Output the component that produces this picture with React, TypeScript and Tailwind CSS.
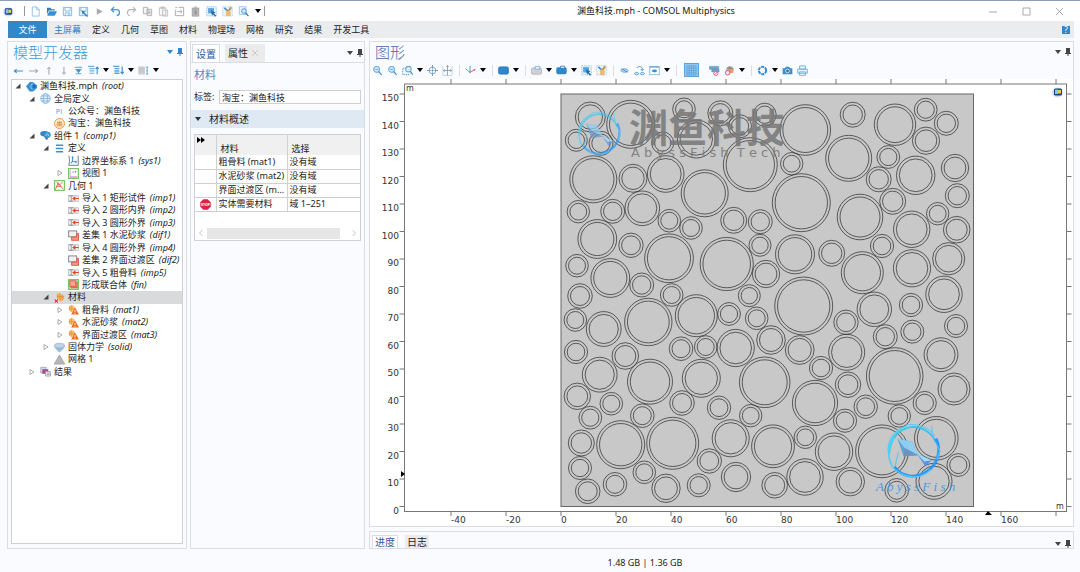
import type { ReactNode } from "react";

const BLUE = "#3a8fd0";
const LIGHT = "#8fbfe4";
const GRAY = "#a8a8a8";
const ORANGE = "#f08a24";

// Todos los iconos se dibujan sobre una rejilla de 12x12
const ICONS: Record<string, ReactNode> = {
  app: (
    <>
      <ellipse cx="5.5" cy="6.5" rx="5.5" ry="5" fill="#d5dcf0" />
      <rect x="2" y="2.5" width="8" height="7" rx="1.5" fill="#1d3f94" />
      <path d="M3 3.5h3v4.5H3z" fill="#7cc8e8" />
      <path d="M6 4h3v3.5H6z" fill="#e5d24a" />
    </>
  ),
  file: <path d="M2.5 1h4.7L10 3.8V11H2.5zM7 1v3h3" fill="none" stroke={LIGHT} />,
  open: (
    <>
      <path d="M1 2h4l1 1.5h3.5V5H3L1 9.5z" fill="#2f7fbf" />
      <path d="M3.4 5.6H12L9.6 10.5H1.2z" fill={BLUE} />
    </>
  ),
  save: (
    <path d="M1.5 1.5h9v9h-9zM3.2 1.5v4h5.6v-4M3.5 10.5v-3h5v3M6.8 8v2" fill="none" stroke="#7fb8e2" />
  ),
  saveAs: (
    <>
      <path d="M1.5 1.5h9v9h-9zM3.2 1.5v4h5.6v-4" fill="#e3f0fa" stroke="#7fb8e2" />
      <path d="M4 5l4 1-1.2 1L11 11 9.7 12 6 8.2 5 9.3z" fill="#2f80bf" />
    </>
  ),
  play: <path d="M3 2.5L9.5 6 3 9.5z" fill="#aaa" />,
  undo: <path d="M4.5 1.2L1.5 4l3 2.8M1.5 4h5.8c4 0 4 6.4 0 6.4" fill="none" stroke="#4a9bd4" strokeWidth="1.5" />,
  redo: <path d="M7.5 1.2l3 2.8-3 2.8M10.5 4H4.7c-4 0-4 6.4-.4 6.4" fill="none" stroke="#b5b5b5" strokeWidth="1.2" />,
  copy: <path d="M1.5 1.5h4.8v7H1.5zM5.5 3.5h5v7h-5zM6.8 5.5h2.5M6.8 7h2.5M6.8 8.5h2.5" fill="#f4f4f4" stroke={GRAY} strokeWidth=".9" />,
  paste: <path d="M1.5 2h7v8h-7zM3.5 1h3v1.7h-3zM5 4.5h5.5V11H5z" fill="#f6f6f6" stroke="#b8b8b8" strokeWidth=".9" />,
  duplicate: <path d="M5 1.5h5.5v9H1.5V4M3 6.2h5.5M6.8 4.2l2 2-2 2M1.5 1.5h2" fill="none" stroke={GRAY} />,
  trash: (
    <>
      <path d="M2.5 3.2h7V11h-7z" fill="#c4c4c4" stroke="#9a9a9a" />
      <path d="M1.8 2.4h8.4M4.5 1.2h3M4.7 4.5v5M6 4.5v5M7.3 4.5v5" stroke="#888" strokeWidth=".8" />
    </>
  ),
  select: (
    <>
      <rect x=".8" y=".8" width="10.4" height="10" fill="#eaf4fb" stroke="#8dc1e6" strokeDasharray="1.4 1" />
      <rect x="2.3" y="2.3" width="6.4" height="5.8" fill="#58a5dc" />
      <path d="M5.5 5l5 2-2 .8 2.6 2.8-1.2 1L7.5 9l-1 1.6z" fill="#2668a3" />
    </>
  ),
  brush: (
    <>
      <rect x=".8" y=".8" width="10.4" height="10" fill="#eef5fb" stroke="#a5cdea" strokeDasharray="1.4 1" />
      <path d="M2.5 2l4.2 3.6" stroke={BLUE} strokeWidth="1.6" />
      <path d="M9 .8L6.2 5l2 1L11 2z" fill="#c99448" />
      <path d="M4 5l6 1.2L9 11.2 4.5 11z" fill="#ecbc72" />
    </>
  ),
  find: (
    <>
      <path d="M1.5.8h7.2v8.5H1.5z" fill="#eef6fc" stroke="#9ac7e8" />
      <circle cx="6.5" cy="5.5" r="2.6" fill="#cfe5f5" stroke="#4e98ce" />
      <path d="M8.4 7.6l3 3.4" stroke="#30688f" strokeWidth="1.3" />
    </>
  ),
  left: <path d="M11 6.500H1.500M4 4.500l-2.500 2L4 8.500" fill="none" stroke={BLUE} strokeWidth="1.200" />,
  right: <path d="M1 6.500h9.500M8 4.500l2.500 2L8 8.500" fill="none" stroke="#aaa" strokeWidth="1.100" />,
  up: <path d="M6.500 10.500V2.500M4.500 4.500l2-2 2 2" fill="none" stroke="#999" />,
  down: <path d="M6.500 2v8M4.500 8l2 2 2-2" fill="none" stroke="#999" />,
  collapse: <path d="M2 2.500h8M2.500 4.800h7M3 9.500h6M4 5.500h4L6 8.500z" fill={BLUE} stroke={BLUE} strokeWidth=".9" />,
  listUp: (
    <>
      <path d="M0 1.500h7M1.500 4h5.500M1.500 6.500h5.500M1.500 9h5.500" stroke="#6fb0de" strokeWidth="1.300" />
      <path d="M10 10V2.500M8.300 4.200L10 2.300l1.700 1.900" fill="none" stroke={BLUE} strokeWidth="1.200" />
    </>
  ),
  listDown: (
    <>
      <path d="M0 1.500h7M1.500 4h5.500M1.500 6.500h5.500M1.500 9h5.500" stroke="#5aa3d8" strokeWidth="1.500" />
      <path d="M10 1.500V9M8.300 7.500L10 9.400l1.700-1.900" fill="none" stroke={BLUE} strokeWidth="1.300" />
    </>
  ),
  columns: (
    <>
      <path d="M.5 1.500h7v9h-7z" fill="#d0d0d0" />
      <path d="M.5 3.500h7M.5 5.500h7M.5 7.500h7" stroke="#b4b4b4" strokeWidth=".6" />
      <path d="M10 1.500v9" stroke="#6aaedd" strokeWidth="1.800" strokeDasharray="2.500 .8" />
    </>
  ),
  root: (
    <>
      <path d="M0 6l4-5h3.500L12 4.500v3L8 11.500H4z" fill={BLUE} />
      <path d="M7 2.500L5 6l2 3.500" stroke="#9fcdef" fill="none" />
      <circle cx="9" cy="6" r="1.600" fill="#1d68a8" />
    </>
  ),
  globe: (
    <g fill="#e6f2fb" stroke="#6fabd8" strokeWidth=".8">
      <circle cx="6" cy="6" r="5.200" />
      <ellipse cx="6" cy="6" rx="2.400" ry="5.200" />
      <path d="M.8 6h10.400M1.600 3.300h8.800M1.600 8.700h8.800" />
    </g>
  ),
  param: (
    <text x="2" y="9" fontSize="8" fill="#5aa5d8" fontFamily="Noto Sans">
      Pi
    </text>
  ),
  bundle: (
    <>
      <circle cx="6" cy="6" r="5.400" fill="#fff0dc" stroke={ORANGE} />
      <path d="M3 5h6M3 8.500h6M4.300 3.500v5M7.700 3.500v5M2.500 6.800h7M6 3v6" stroke={ORANGE} strokeWidth=".8" />
    </>
  ),
  component: (
    <>
      <ellipse cx="5" cy="4" rx="4.800" ry="2.800" fill="#2e86c6" />
      <path d="M3.500 6h5v4L7 11z" fill="#2878b8" />
      <ellipse cx="8" cy="5.300" rx="3.800" ry="3.400" fill="#3e95d3" />
      <path d="M6.500 6.500c0-3 3-3 3 0" fill="none" stroke="#d7ebf9" strokeWidth=".8" />
    </>
  ),
  lines: <path d="M2 2.500h8M2 6h8M2 9.500h8" stroke={BLUE} strokeWidth="1.500" />,
  coords: (
    <>
      <path d="M1 .8c0 3 1 3.500.5 6.500L.8 11.300h10.400V.8" fill="#f4f6fa" stroke="#5b6b80" strokeWidth=".9" />
      <path d="M5 2v5l4.500 .5M5 7L3 9" fill="none" stroke={BLUE} strokeWidth="1.100" />
      <path d="M3.800 3L5 1.400 6.200 3M8 6l2 1.500-2 1" fill={BLUE} />
    </>
  ),
  view: (
    <>
      <rect x=".7" y=".7" width="10.600" height="10.600" fill="#fff" stroke="#6cbf5e" strokeWidth="1.200" />
      <path d="M2.300 2v8h8M2.300 9.700h8" fill="none" stroke="#d98ec0" strokeWidth=".9" />
      <path d="M5 3.500l1.500 2M6.500 3.500L5 5.500M7.500 3.500l.8 1 .7-1M8.300 4.500v1" stroke="#899" strokeWidth=".6" />
    </>
  ),
  geometry: (
    <>
      <rect x=".7" y=".7" width="10.600" height="10.600" fill="#fff" stroke="#6cbf5e" strokeWidth="1.200" />
      <path d="M1.500 10.500L4.500 3l5.500 7M3 2l2.500 4L9.500 2M2.700 7h5" fill="none" stroke="#e2553f" strokeWidth=".9" />
    </>
  ),
  import: (
    <>
      <path d="M.5 3h11v6H.5z" fill="#f2f2f3" stroke="#b4b6bb" strokeWidth=".8" />
      <path d="M.5 3h5.500M3.500 3v6M.5 9h5.500" stroke="#85898f" strokeWidth=".9" />
      <path d="M11.800 6H6M7.500 4.500L5.500 6l2 1.500z" fill="#e0492d" stroke="#e0492d" strokeWidth="1.200" />
    </>
  ),
  difference: (
    <>
      <rect x="4" y="4" width="7.500" height="7.200" fill="#f39a86" stroke="#e2553f" />
      <rect x=".7" y="1" width="8.800" height="6.500" fill="#f1f1f2" stroke="#7b7f86" />
      <path d="M4 7.600h5.500V4" fill="none" stroke="#e2553f" strokeWidth=".8" />
    </>
  ),
  union: (
    <>
      <rect x=".7" y=".7" width="10.600" height="10.600" fill="#c9e8b9" stroke="#6cbf5e" strokeWidth="1.200" />
      <rect x="3.300" y="3.500" width="6.700" height="6" fill="#f39a86" stroke="#e2553f" />
      <rect x="2" y="2" width="6.500" height="6" fill="#f5a693" stroke="#e2553f" />
    </>
  ),
  materials: (
    <>
      <path d="M3 2l3-1 2 2 3 1v4L8 10H5L3 7z" fill="#f4b868" />
      <path d="M4 5h7M6.500 1.500V9M9 3v6M4 3v4" stroke="#e0923a" strokeWidth="1" />
      <path d="M0 7.500h5V12H0z" fill="#fde8ee" />
      <path d="M.7 8L4.300 11.500M4.300 8L.7 11.500" stroke="#d81e4a" strokeWidth="1.200" />
    </>
  ),
  material: (
    <>
      <path d="M1 3l3-2 3 1.500v4L4 9 1 7z" fill="#f7bf75" />
      <path d="M1 5h6M4 1v7M2 2v5" stroke="#e8993c" strokeWidth=".9" />
      <path d="M7.500 3.500L12 11.500H3.500z" fill="#f26a1b" />
      <path d="M7.600 6.500v2.500M7.600 9.700v1" stroke="#fff" />
    </>
  ),
  solid: (
    <>
      <path d="M.5 4.500h11c0 3-3 3.500-3.800 6H4.300C3.500 8 .5 7.500.5 4.500z" fill="#9dbdd8" />
      <ellipse cx="6" cy="4" rx="5.500" ry="2.600" fill="#bdd3e6" stroke="#8fa9c2" strokeWidth=".7" />
    </>
  ),
  mesh: <path d="M6 1L11.700 11H.3z" fill="#b5b7ba" stroke="#96999d" strokeWidth=".8" />,
  results: (
    <>
      <path d="M.8 1.500h6v6h-6z" fill="#dcd3e2" stroke="#a394ad" strokeWidth=".8" />
      <path d="M2.500 3.500h6.500v5H2.500z" fill="#a54a94" />
      <path d="M6 6h5.500v5H6z" fill="#ececec" stroke="#8f979e" strokeWidth=".8" />
      <path d="M7.500 7.800h3M7.500 9.300h3" stroke="#879" strokeWidth=".7" />
    </>
  ),
  zoom: (
    <>
      <circle cx="5" cy="4.800" r="3.200" fill="#d9ecf9" stroke="#64a9dc" strokeWidth="1.100" />
      <path d="M7.300 7.300l3.200 3.400" stroke={BLUE} strokeWidth="1.300" />
      <path d="M3.500 4.800h3" stroke={BLUE} strokeWidth=".8" />
    </>
  ),
  zoomBox: (
    <>
      <path d="M5 3.500H.8v7h7" fill="none" stroke={BLUE} strokeDasharray="1.400 1" />
      <circle cx="7" cy="4.500" r="3" fill="#d9ecf9" stroke="#64a9dc" strokeWidth="1.100" />
      <path d="M9 7l2.700 3.500" stroke={BLUE} strokeWidth="1.300" />
    </>
  ),
  target: (
    <>
      <circle cx="6" cy="6" r="3.700" fill="none" stroke="#8da1b3" />
      <path d="M6 0v4M6 8v4M0 6h4M8 6h4" stroke="#6f96b5" />
      <circle cx="6" cy="6" r="1" fill={BLUE} />
    </>
  ),
  extents: (
    <>
      <path d="M1 1v10M11 1v10M1 11.500h10" stroke="#b9c9d6" strokeWidth=".8" />
      <path d="M6 .5v11M1.500 6h9M4.800 2L6 .5 7.200 2M3 4.800L1.500 6 3 7.200M9 4.800L10.500 6 9 7.200" fill="none" stroke="#7c98af" strokeWidth=".9" />
    </>
  ),
  axes: (
    <>
      <path d="M5.500 7.500V1" stroke={BLUE} />
      <path d="M5.500 8L.5 4" stroke="#68b35c" />
      <path d="M5.500 8l5.500-3" stroke="#dc5a78" />
      <circle cx="5.500" cy="8" r="1.100" fill="#999" />
      <path d="M9 4.500l2.500-.3-1 2.300z" fill="#dc5a78" />
    </>
  ),
  box: <path d="M.3 4.500c0-2 1-2.500 3-2.500h5.400c2 0 3 .5 3 2.500v3c0 2-1 2.500-3 2.500H3.300c-2 0-3-.5-3-2.500z" fill="#2f86c8" stroke="#2674b3" strokeWidth=".6" />,
  boxGray: (
    <>
      <path d="M.3 5.500c0-2 1-2.300 2.500-2.300h6.400c1.500 0 2.500.3 2.500 2.300v2.300c0 2-1 2.300-2.500 2.300H2.800C1.300 10.100.3 9.800.3 7.800z" fill="#cfd1d4" stroke="#a3a5a9" strokeWidth=".7" />
      <path d="M4.500 1.500h5v3h-5z" fill="#eaf4fb" stroke="#6aa7d3" strokeWidth=".8" />
    </>
  ),
  boxBlue: (
    <>
      <path d="M.3 5c0-2 1-2.500 3-2.500h5.400c2 0 3 .5 3 2.500v2.500c0 2-1 2.500-3 2.500H3.300c-2 0-3-.5-3-2.500z" fill="#2f86c8" />
      <path d="M5 1.200h4.500v2.600H5z" fill="#d5e9f7" stroke="#2674b3" strokeWidth=".8" />
    </>
  ),
  eye: (
    <>
      <path d="M2 6c2-2.500 6-2.500 8 0-2 2.500-6 2.500-8 0z" fill="#c4dff2" stroke={BLUE} strokeWidth=".9" />
      <path d="M2.500 4l7 4" stroke={BLUE} />
    </>
  ),
  eyeSwap: (
    <>
      <path d="M3.500 3.500c.5-2.500 5-2.500 5.500.5v2M7.500 4.500L9 6.200l1.500-1.700" fill="none" stroke={BLUE} />
      <path d="M.5 9.500c1-2 3.700-2 4.800 0-1.100 1.600-3.800 1.600-4.800 0zM6.700 9.500c1-2 3.700-2 4.800 0-1.100 1.600-3.800 1.600-4.800 0z" fill="#d9ecf9" stroke={BLUE} strokeWidth=".9" />
    </>
  ),
  eyeBox: (
    <>
      <rect x=".8" y="1.800" width="10.400" height="8.700" fill="#fff" stroke="#8bbce2" />
      <path d="M.8 2.200h10.400" stroke={BLUE} />
      <path d="M3 6.500c1.500-2 4.500-2 6 0-1.500 1.800-4.500 1.800-6 0z" fill={BLUE} />
    </>
  ),
  grid: <path d="M1 1h10v10H1zM6 1v10M1 6h10M3.500 1v10M8.500 1v10M1 3.500h10M1 8.500h10" fill="none" stroke="#5a9ccc" strokeWidth=".7" />,
  labelsOff: (
    <>
      <path d="M.5 1.500h10v3.200H.5zM3 5h8v2.500H3z" fill="#6aa7d3" stroke="#5c8db2" strokeWidth=".6" />
      <circle cx="7.500" cy="9.200" r="2.300" fill="#fff" stroke="#e2557a" />
      <path d="M6 10.700l3-3" stroke="#e2557a" />
    </>
  ),
  palette: (
    <>
      <ellipse cx="6.500" cy="5" rx="4.200" ry="4" fill="#b9b9bc" />
      <path d="M3 4c2-3 6-2 7 1L6.500 5z" fill="#8a8a8a" />
      <path d="M6 4.500h4v4H6z" fill="#f29a4d" />
      <circle cx="4" cy="8.500" r="2.500" fill="#fbe5e9" stroke="#dd4a68" />
    </>
  ),
  refresh: <circle cx="6" cy="6" r="4" fill="none" stroke={BLUE} strokeWidth="2.200" strokeDasharray="3.400 .8" />,
  camera: (
    <>
      <path d="M.7 3.500h2.500L4.300 2h3.400l1.100 1.500h2.500V10H.7z" fill={BLUE} />
      <circle cx="6" cy="6.500" r="2" fill="#2370ad" stroke="#d6e9f7" />
    </>
  ),
  print: (
    <path d="M2.800 1h6.400v3.500H2.800zM.8 4.500h10.400V9H.8zM2.800 7.500h6.400V11.300H2.800z" fill="#eaf4fb" stroke="#6fb0de" />
  ),
  stop: (
    <>
      <path d="M3.600 .3h4.800L11.700 3.600v4.800L8.400 11.700H3.600L.3 8.400V3.600z" fill="#dc1f4e" />
      <text x="6" y="7.600" textAnchor="middle" fontSize="4" fontWeight="700" fill="#fff" fontFamily="Noto Sans">
        STOP
      </text>
    </>
  ),
};

function Icon({ name, className = "size-[11px]" }: { name: string; className?: string }) {
  return (
    <svg viewBox="0 0 12 12" className={`${className} shrink-0`} aria-hidden="true">
      {ICONS[name]}
    </svg>
  );
}

function Caret({ color = "#222" }: { color?: string }) {
  return (
    <svg viewBox="0 0 6 4" className="h-[4px] w-[6px] shrink-0" aria-hidden="true">
      <path d="M0 0h6L3 4z" fill={color} />
    </svg>
  );
}

function Pin({ color = "#555" }: { color?: string }) {
  return (
    <svg viewBox="0 0 6 8" className="h-[8px] w-[6px] shrink-0" aria-hidden="true">
      <path d="M1 0h4v5h1v1H0V5h1zM2.500 6h1v2h-1z" fill={color} />
    </svg>
  );
}

function PanelButtons({ color = "#444" }: { color?: string }) {
  return (
    <div className="ml-auto flex items-center gap-1">
      <button type="button" aria-label="菜单">
        <Caret color={color} />
      </button>
      <button type="button" aria-label="固定">
        <Pin color={color} />
      </button>
    </div>
  );
}

// "v" es una flecha desplegable y "|" un separador
function Toolbar({ items, active }: { items: string[]; active?: string }) {
  return (
    <div className="mb-px flex h-4 items-center">
      {items.map((item, i) => {
        if (item === "|") {
          return (
            <span key={i} className="flex w-2 justify-center">
              <span className="h-[11px] w-px bg-[#dcdde2]" />
            </span>
          );
        }
        if (item === "v") {
          return (
            <button key={i} type="button" aria-label="更多" className="flex w-[10px] justify-center">
              <Caret color="#000" />
            </button>
          );
        }
        return (
          <button
            key={i}
            type="button"
            aria-label={item}
            className={
              item === active
                ? "mr-2 ml-1 flex h-[14px] w-[15px] items-center justify-center border border-[#5ba5df] bg-[#90c5f0]"
                : "flex w-[15px] items-center justify-center"
            }
          >
            <Icon name={item} />
          </button>
        );
      })}
    </div>
  );
}

const QUICK = ["file", "open", "save", "saveAs", "play", "undo", "redo", "copy", "paste", "duplicate", "trash", "select", "brush", "find"];
const MENU = ["主屏幕", "定义", "几何", "草图", "材料", "物理场", "网格", "研究", "结果", "开发工具"];
const TREE_TOOLS = ["left", "right", "up", "down", "collapse", "listUp", "v", "listDown", "v", "columns", "v"];
const GRAPHICS_TOOLS = [
  "zoom", "zoom", "zoomBox", "v", "target", "extents", "|", "axes", "v", "|", "box", "v", "|",
  "boxGray", "v", "boxBlue", "v", "select", "brush", "|", "eye", "eyeSwap", "eyeBox", "v", "|",
  "grid", "labelsOff", "palette", "v", "|", "refresh", "v", "camera", "print",
];

interface TreeNode {
  depth: number;
  icon: string;
  label: string;
  tag?: string;
  state?: "open" | "closed";
  selected?: boolean;
}

const TREE: TreeNode[] = [
  { depth: 0, icon: "root", label: "渊鱼科技.mph", tag: "(root)", state: "open" },
  { depth: 1, icon: "globe", label: "全局定义", state: "open" },
  { depth: 2, icon: "param", label: "公众号：渊鱼科技" },
  { depth: 2, icon: "bundle", label: "淘宝：渊鱼科技" },
  { depth: 1, icon: "component", label: "组件 1", tag: "(comp1)", state: "open" },
  { depth: 2, icon: "lines", label: "定义", state: "open" },
  { depth: 3, icon: "coords", label: "边界坐标系 1", tag: "(sys1)" },
  { depth: 3, icon: "view", label: "视图 1", state: "closed" },
  { depth: 2, icon: "geometry", label: "几何 1", state: "open" },
  { depth: 3, icon: "import", label: "导入 1 矩形试件", tag: "(imp1)" },
  { depth: 3, icon: "import", label: "导入 2 圆形内界", tag: "(imp2)" },
  { depth: 3, icon: "import", label: "导入 3 圆形外界", tag: "(imp3)" },
  { depth: 3, icon: "difference", label: "差集 1 水泥砂浆", tag: "(dif1)" },
  { depth: 3, icon: "import", label: "导入 4 圆形外界", tag: "(imp4)" },
  { depth: 3, icon: "difference", label: "差集 2 界面过渡区", tag: "(dif2)" },
  { depth: 3, icon: "import", label: "导入 5 粗骨料", tag: "(imp5)" },
  { depth: 3, icon: "union", label: "形成联合体", tag: "(fin)" },
  { depth: 2, icon: "materials", label: "材料", state: "open", selected: true },
  { depth: 3, icon: "material", label: "粗骨料", tag: "(mat1)", state: "closed" },
  { depth: 3, icon: "material", label: "水泥砂浆", tag: "(mat2)", state: "closed" },
  { depth: 3, icon: "material", label: "界面过渡区", tag: "(mat3)", state: "closed" },
  { depth: 2, icon: "solid", label: "固体力学", tag: "(solid)", state: "closed" },
  { depth: 2, icon: "mesh", label: "网格 1" },
  { depth: 1, icon: "results", label: "结果", state: "closed" },
];

const INDENT = ["pl-0", "pl-[14px]", "pl-[28px]", "pl-[42px]"];

const MATERIALS = [
  { name: "粗骨料 (mat1)", selection: "没有域" },
  { name: "水泥砂浆 (mat2)", selection: "没有域" },
  { name: "界面过渡区 (m...", selection: "没有域" },
  { name: "实体需要材料", selection: "域 1–251", stop: true },
];

// Áridos: [cx, cy, radio exterior]
const CIRCLES = [
  [590.3, 117, 15], [630.7, 124.3, 24], [684, 109.3, 11.3], [720.3, 113.3, 12.5], [764.7, 114.7, 11.5],
  [576.3, 140.3, 11], [601, 143.3, 12], [662.7, 143, 11], [696.3, 139, 19], [740, 126.3, 11.5],
  [750.3, 164.7, 27], [593.3, 179.3, 23.5], [633, 178.3, 14], [665.7, 174, 18.3], [704.7, 193.3, 23.5],
  [578.3, 211.7, 11.2], [612.7, 211.3, 12], [642.3, 208.3, 17.3], [669.3, 220.7, 11.3], [691, 228, 11.3],
  [733.7, 220.3, 13], [760.3, 221.7, 12], [597.3, 239, 19.4], [631, 245.3, 12.2], [669, 258.3, 24.4],
  [726.7, 264, 26.6], [760, 245.3, 11], [766, 274, 13.7], [577, 265.7, 11.3], [610.3, 278, 19.4],
  [641.7, 285, 12], [580, 296, 12.3], [671.7, 295, 11.3], [648.3, 322, 23.7], [696.3, 315.7, 21],
  [749.3, 295.7, 11], [575.3, 320, 11.3], [603.7, 329, 17.4], [729, 314, 11.4], [756.7, 318.3, 11.3],
  [576, 352, 11.6], [625.3, 356, 13.3], [681, 348.7, 11.8], [705.7, 347, 11.3], [735.7, 348, 18.6],
  [771, 340, 14.3], [599.7, 374.7, 17.4], [650, 381.7, 22.5], [701.3, 378.3, 19], [764.7, 382.3, 25.3],
  [577.3, 396.3, 13.2], [611.3, 403.7, 11.3], [682, 403, 12.3], [719, 407.7, 11.7], [590.3, 417.7, 11.4],
  [642.3, 415.7, 11.8], [750.7, 415.7, 11.2], [620.7, 444.7, 24], [672.7, 443.3, 26], [730.7, 438.3, 18.5],
  [773, 446.3, 21.4], [581.3, 443, 13], [580, 468, 11.5], [709.3, 461, 12.2], [644.3, 472.3, 11.3],
  [587.7, 491.3, 12.3], [615, 484.3, 11.8], [666, 488.3, 14.2], [698.7, 485.3, 11.5], [736, 477, 14.7],
  [774.7, 485.3, 12.8], [805.3, 130, 25.3], [852.7, 114.7, 12.5], [895, 124.7, 20.7], [925.7, 109.7, 11.4],
  [946.3, 123.3, 12], [926, 140.7, 13.6], [848.7, 158.3, 23], [791.7, 163.7, 11.2], [888.3, 157, 11.4],
  [915.7, 175.3, 19.2], [955, 168, 13.7], [878.7, 179.3, 12.5], [957.3, 195.7, 12], [801.3, 202.7, 29],
  [892.7, 201.3, 13], [860, 217, 22.8], [937.7, 213.7, 11.2], [956.7, 229.7, 13.3], [911.7, 229.3, 18.2],
  [882, 246, 11.6], [795, 254.3, 19.5], [831.7, 253.3, 13], [862.3, 272.7, 21], [912, 268.3, 18.6],
  [948.7, 258.7, 16.1], [944, 294.3, 18.2], [803.7, 306, 29], [874.3, 309.3, 17.2], [911, 305, 11.6],
  [846, 322.3, 12.2], [956, 326, 11.5], [885.3, 336.7, 12], [912.3, 331.7, 11.5], [799.7, 350, 14.4],
  [846.7, 352.3, 18], [941, 354.7, 16.9], [821, 368, 11.6], [894.7, 376, 28.3], [848, 384.7, 12.7],
  [954, 389, 16], [815, 403, 22.6], [865.7, 406.7, 11.7], [845, 420.7, 11.6], [924.7, 403, 11.6],
  [899.3, 416, 11.2], [805.3, 437.3, 11.2], [834, 451.7, 18.7], [882, 451.3, 26.4], [936.3, 438.3, 21.8],
  [805, 477, 18.2], [850.3, 481.7, 14.2], [896.7, 490.3, 11.8], [934, 481.3, 18], [958.3, 465, 11.4],
];

const X_TICKS = [-40, -20, 0, 20, 40, 60, 80, 100, 120, 140, 160, 180];
const Y_TICKS = [0, 10, 20, 30, 40, 50, 60, 70, 80, 90, 100, 110, 120, 130, 140, 150];
const SCALE = 2.75;

function FishLogo({ x, y, r, opacity }: { x: number; y: number; r: number; opacity: number }) {
  return (
    <g transform={`translate(${x} ${y}) scale(${r / 25})`} opacity={opacity}>
      <path d="M-24 3C-23-12-15-21-3-23 8-24 18-17 21-8" fill="none" stroke="#35c3ee" strokeWidth="1.800" />
      <path d="M21-12c6 11 2 25-9 32-10 7-24 5-31-5" fill="none" stroke="#1f98ff" strokeWidth="2.800" />
      <path d="M-24 4c-3-13 5-24 17-28M-21 14c-5-8-4-19 2-27" fill="none" stroke="#48d2f4" strokeWidth="1.600" />
      <path d="M-22 14C-12 26 6 29 16 18M-8-25C4-27 16-22 20-14M18-16l-1-8M-18 14l3-13M22-6l3 6-3 8" fill="none" stroke="#55c8f8" strokeWidth="1.100" />
      <path d="M-16-12L-2-9 4 4-10 5z" fill="#5f9fd8" />
      <path d="M-16-12l7 9 13 7L-2-9z" fill="#8cd0f5" />
      <path d="M-10 5l1-8L4 4z" fill="#6a93c2" />
      <path d="M3 3l14 6-6 6z" fill="#5b8fe0" />
      <path d="M3 3l14 6-7 1z" fill="#9ce0ff" />
    </g>
  );
}

function Plot() {
  return (
    <svg viewBox="370 79 703 447" className="block min-h-0 w-full flex-1 bg-white" role="img" aria-label="几何图形">
      <rect x="561" y="94" width="412.500" height="412.500" fill="#c8c8c8" stroke="#666" />
      <g fill="none" stroke="#333" strokeWidth=".75">
        {CIRCLES.map(([cx, cy, r]) => (
          <g key={`${cx}-${cy}`}>
            <circle cx={cx} cy={cy} r={r} />
            <circle cx={cx} cy={cy} r={r - 2.8} />
          </g>
        ))}
      </g>

      <rect x="404.500" y="84" width="662" height="427.500" fill="none" stroke="#777" />
      <g stroke="#777">
        {X_TICKS.map((v) => {
          const x = 561 + v * SCALE;
          return (
            <g key={v}>
              <path d={`M${x} 79v5M${x} 511v5`} />
              {v < 180 && (
                <text x={x} y="523" fontSize="9" fill="#333" stroke="none" fontFamily="DejaVu Sans">
                  {v}
                </text>
              )}
            </g>
          );
        })}
        {Y_TICKS.map((v) => {
          const y = 506.5 - v * SCALE;
          return (
            <g key={v}>
              <path d={`M399.500 ${y}h5M1066.500 ${y}h5`} />
              <text x="399" y={y + 7} textAnchor="end" fontSize="9" fill="#333" stroke="none" fontFamily="DejaVu Sans">
                {v}
              </text>
            </g>
          );
        })}
      </g>
      <g fontSize="8" fill="#333" fontFamily="DejaVu Sans">
        <text x="406" y="91">m</text>
        <text x="1056" y="509">m</text>
      </g>
      <path d="M401 471l4 3-4 3zM985 515l3-4 4 4z" fill="#000" />

      <svg x="1052" y="86" width="12" height="12" viewBox="0 0 12 12">
        {ICONS.app}
      </svg>

      {/* Marcas de agua */}
      <FishLogo x={599.500} y={133.500} r={21} opacity={0.7} />
      <g fill="#777" opacity=".85">
        <text x="629" y="142" fontSize="39" fontWeight="700" fontFamily="Noto Sans CJK SC">
          渊鱼科技
        </text>
        <text x="631" y="157" fontSize="13" fontFamily="DejaVu Sans">
          {"A b y s s F i s h \u00a0T e c h"}
        </text>
      </g>
      <FishLogo x={914} y={451} r={26} opacity={0.95} />
      <text x="876" y="491" fontSize="13" fontStyle="italic" fill="#4a9bdc" fontFamily="Liberation Serif">
        A b y s s F i s h
      </text>
    </svg>
  );
}

function ModelTree() {
  return (
    <section className="flex w-[180px] shrink-0 flex-col border border-[#dcdde2] px-[3px] pb-1">
      <div className="flex h-5 items-center pl-[2px]">
        <h2 className="text-[15px] leading-5 font-light text-[#3b9bdc]">模型开发器</h2>
        <PanelButtons color="#2f86c8" />
      </div>
      <Toolbar items={TREE_TOOLS} />
      <div className="flex-1 border border-[#cfd0d4] bg-white">
        <ul role="tree" className="flex h-[298px] flex-col">
          {TREE.map((node) => (
            <li
              key={node.label}
              role="treeitem"
              aria-selected={!!node.selected}
              className={`flex flex-1 items-center whitespace-nowrap ${INDENT[node.depth]} ${node.selected ? "bg-[#d9dadc]" : ""}`}
            >
              <span className="flex w-3 shrink-0 justify-center">
                {node.state && (
                  <button type="button" aria-label="展开">
                    <svg viewBox="0 0 6 6" className="size-[6px]" aria-hidden="true">
                      {node.state === "open" ? (
                        <path d="M5.500 .5v5h-5z" fill="#444" />
                      ) : (
                        <path d="M1 .5L5 3 1 5.500z" fill="#fff" stroke="#999" strokeWidth=".8" />
                      )}
                    </svg>
                  </button>
                )}
              </span>
              <span className="mr-[2px] flex w-[14px] shrink-0 justify-center">
                <Icon name={node.icon} />
              </span>
              <span>{node.label}</span>
              {node.tag && <em className="ml-1">{node.tag}</em>}
            </li>
          ))}
        </ul>
      </div>
    </section>
  );
}

function Settings() {
  return (
    <section className="w-[175px] shrink-0 border border-[#dcdde2]">
      <div className="flex h-[21px] items-end border-b border-[#dcdde2] px-px text-[10px]">
        <button type="button" className="h-[18px] border border-b-0 border-[#dcdde2] bg-white px-[3px] text-[#2f5a9e]">
          设置
        </button>
        <button type="button" className="ml-[5px] flex h-[18px] items-center gap-1 bg-[#ebebec] px-[3px]">
          属性
          <svg viewBox="0 0 6 6" className="mr-1 size-[6px]" aria-hidden="true">
            <path d="M0 0l6 6M6 0L0 6" stroke="#c5c8d0" />
          </svg>
        </button>
        <div className="ml-auto flex h-[18px] items-center">
          <PanelButtons />
        </div>
      </div>
      <h3 className="pt-1 pl-[3px] text-[11px] leading-4 text-[#6484bb]">材料</h3>
      <div className="flex items-center px-[3px] pt-[7px]">
        <label htmlFor="etiqueta" className="w-[25px] shrink-0">
          标签:
        </label>
        <input
          id="etiqueta"
          defaultValue="淘宝：渊鱼科技"
          className="h-[14px] min-w-0 flex-1 border border-[#cfd0d4] bg-white px-[2px] outline-none"
        />
      </div>
      <button type="button" className="mt-[6px] flex h-[18px] w-full items-center gap-2 bg-[#dfe9f4] px-1 text-[10px]">
        <Caret color="#333" />
        材料概述
      </button>
      <div className="mx-[3px] mt-[6px] border border-[#cfd0d4] bg-white">
        <table className="w-full table-fixed border-collapse text-left">
          <thead>
            <tr className="h-5 bg-[#f0f0f0] align-bottom">
              <th className="w-[21px] border-r border-[#cfd0d4] px-[2px] align-top">
                <svg viewBox="0 0 8 6" className="mt-[2px] h-[6px] w-[8px]" aria-hidden="true">
                  <path d="M0 0l4 3-4 3zM4 0l4 3-4 3z" fill="#000" />
                </svg>
              </th>
              <th className="w-[71px] border-r border-[#cfd0d4] px-1 font-normal">材料</th>
              <th className="px-1 font-normal">选择</th>
            </tr>
          </thead>
          <tbody>
            {MATERIALS.map((m) => (
              <tr key={m.name} className="h-[14px] border-b border-[#cfd0d4]">
                <td className="border-r border-[#cfd0d4]">
                  {m.stop && (
                    <div className="flex justify-center">
                      <Icon name="stop" />
                    </div>
                  )}
                </td>
                <td className="border-r border-[#cfd0d4] pl-[2px] whitespace-nowrap">{m.name}</td>
                <td className="px-[2px]">{m.selection}</td>
              </tr>
            ))}
          </tbody>
        </table>
        <div className="mt-[15px] flex h-[13px] items-center gap-1 px-1">
          <svg viewBox="0 0 4 6" className="h-[6px] w-[4px]" aria-hidden="true">
            <path d="M3.500 0l-3 3 3 3" fill="none" stroke="#c5c5c5" />
          </svg>
          <div className="mr-2 h-[11px] flex-1 bg-[#e6e6e6]" />
          <svg viewBox="0 0 4 6" className="h-[6px] w-[4px]" aria-hidden="true">
            <path d="M.5 0l3 3-3 3" fill="none" stroke="#c5c5c5" />
          </svg>
        </div>
      </div>
    </section>
  );
}

export default function App() {
  return (
    <div className="flex min-h-screen flex-col border-t border-[#8b9cbd] bg-[#fafbff] font-['Noto_Sans','Noto_Sans_CJK_SC',sans-serif] text-[9px] leading-3 text-[#222]">
      <header className="grid h-5 grid-cols-[1fr_auto_1fr] items-center bg-white">
        <div className="flex items-center pl-[3px]">
          <Icon name="app" />
          <span className="mr-[2px] ml-[10px] h-[10px] w-px bg-[#999]" />
          {QUICK.map((name) => (
            <button key={name} type="button" aria-label={name} className="flex w-4 justify-center">
              <Icon name={name} />
            </button>
          ))}
          <button type="button" aria-label="更多" className="ml-1">
            <Caret color="#000" />
          </button>
          <span className="ml-[3px] h-[10px] w-px bg-[#999]" />
        </div>
        <h1 className="pl-[232px]">渊鱼科技.mph - COMSOL Multiphysics</h1>
        <div className="flex items-center justify-end gap-6 pr-4">
          {["M0 5h8", "M1 1h7v7H1z", "M1 1l7 7M8 1L1 8"].map((d) => (
            <button key={d} type="button" aria-label="窗口">
              <svg viewBox="0 0 9 9" className="size-[9px]" aria-hidden="true">
                <path d={d} fill="none" stroke="#aaa" />
              </svg>
            </button>
          ))}
        </div>
      </header>

      <nav className="mr-[6px] ml-2 flex h-[17px] items-center bg-[#ebecee]">
        <button type="button" className="h-full w-[39px] bg-[#3287c9] text-white">
          文件
        </button>
        <div className="ml-[7px] flex gap-[11px]">
          {MENU.map((item, i) => (
            <button key={item} type="button" className={i === 0 ? "text-[#2f80c2]" : ""}>
              {item}
            </button>
          ))}
        </div>
        <button type="button" className="mr-1 ml-auto size-[8px] bg-[#3287c9] text-[8px] leading-2 text-white">
          ?
        </button>
      </nav>

      <main className="mt-[3px] mr-[6px] ml-[7px] flex flex-1 gap-[3px]">
        <ModelTree />
        <Settings />
        <div className="flex min-w-0 flex-1 flex-col gap-1 pl-px">
          <section className="flex min-h-0 flex-1 flex-col border border-[#dcdde2]">
            <div className="flex h-5 items-center pr-[2px] pl-[5px]">
              <h2 className="text-[15px] leading-5 font-light text-[#4468ad]">图形</h2>
              <PanelButtons />
            </div>
            <Toolbar items={GRAPHICS_TOOLS} active="grid" />
            <Plot />
          </section>
          <section className="flex h-[18px] items-end border border-[#dcdde2] pr-[2px] pl-[2px] text-[10px]">
            <button type="button" className="h-[13px] border border-b-0 border-[#dcdde2] bg-white px-[2px] text-[#2f5a9e]">
              进度
            </button>
            <button type="button" className="ml-[7px] h-[13px] bg-[#ebebec] px-[2px]">
              日志
            </button>
            <PanelButtons />
          </section>
        </div>
      </main>

      <footer className="flex h-[23px] items-center justify-center pt-[5px] pl-[210px]">1.48 GB | 1.36 GB</footer>
    </div>
  );
}
